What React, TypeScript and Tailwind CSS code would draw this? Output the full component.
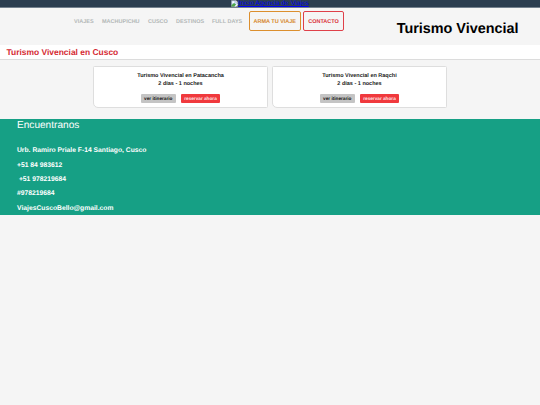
const links = [
  { label: "VIAJES", width: "w-[20px]" },
  { label: "MACHUPICHU", width: "w-[38px]" },
  { label: "CUSCO", width: "w-[20px]" },
  { label: "DESTINOS", width: "w-[28px]" },
  { label: "FULL DAYS", width: "w-[31px]" },
];

const tours = [
  { name: "Turismo Vivencial en Patacancha", duration: "2 días - 1 noches" },
  { name: "Turismo Vivencial en Raqchi", duration: "2 días - 1 noches" },
];

const contact = [
  "Urb. Ramiro Priale F-14 Santiago, Cusco",
  "+51 84 983612",
  "\u00a0+51 978219684",
  "#978219684",
  "ViajesCuscoBello@gmail.com",
];

const BrokenImage = () => (
  <svg className="h-[7px] w-[7px] shrink-0" viewBox="0 0 16 16">
    <path d="M1 1h10l4 4v10H1z" fill="#c5d8f4" stroke="#a5a9ad" />
    <path d="M11 1v4h4z" fill="#fff" stroke="#a5a9ad" />
    <circle cx="5" cy="5" r="2" fill="#fff" />
    <path d="M1 15v-3l6-5 5 4-5 4z" fill="#4ea846" />
    <path d="M8 15l7-7v3l-4 4z" fill="#fff" />
  </svg>
);

const TopBar = () => (
  <div className="flex h-2 justify-center border-b border-[#74818e] bg-[#2c3e50]">
    <a href="#" className="flex h-[7px] text-[6.7px] leading-[7.6px] whitespace-nowrap text-[#0000ee] underline decoration-[0.5px] underline-offset-[1px]">
      <BrokenImage />
      Inicio Agencia de Viajes
    </a>
  </div>
);

const Header = () => (
  <header className="flex h-[37px] items-start justify-between pr-[21.5px] pl-[74px]">
    <nav className="flex items-center pt-[3px] text-[5.5px] leading-[8px] font-bold whitespace-nowrap text-[#b3b7b7]">
      {links.map((link) => (
        <a key={link.label} href="#" className={`mr-2 pt-px ${link.width}`}>
          {link.label}
        </a>
      ))}
      <a href="#" className="-ml-[2.5px] flex h-5 w-[52.5px] items-center justify-center rounded-[2px] border border-[#dc8f2e] pt-px text-[#d5872a]">
        ARMA TU VIAJE
      </a>
      <a href="#" className="ml-[2px] flex h-5 w-[41px] items-center justify-center rounded-[2px] border border-[#df4049] pt-px text-[#d92f3a]">
        CONTACTO
      </a>
    </nav>
    <h1 className="pt-[13px] text-[14.4px] leading-[17px] font-bold whitespace-nowrap text-black">Turismo Vivencial</h1>
  </header>
);

const TourCard = ({ name, duration }: { name: string; duration: string }) => (
  <article className="flex h-[42px] w-[175px] flex-col items-center rounded-[1.5px] rounded-bl-[5px] border border-[#dedede] bg-white pt-[4px] font-bold text-[#222]">
    <h3 className="text-[5.5px] leading-[10px]">{name}</h3>
    <p className="-mt-px text-[5.5px] leading-[8px]">{duration}</p>
    <div className="mt-[6px] flex gap-[5px] text-[4.7px] leading-[9px]">
      <a href="#" className="h-[9px] w-[35px] rounded-[1px] bg-[#c4c4c4] text-center text-[#111]">ver itinerario</a>
      <a href="#" className="h-[9px] w-[39.5px] rounded-[1px] bg-[#f0393d] text-center text-[#ffe5e5]">reservar ahora</a>
    </div>
  </article>
);

const Footer = () => (
  <footer className="h-24 bg-[#16a085] pl-[17px] text-white">
    <h2 className="pt-px text-[10.1px] leading-[12px]">Encuentranos</h2>
    <ul className="pt-[12.2px] text-[6.75px] leading-[14.33px] font-bold">
      {contact.map((line) => (
        <li key={line}>{line}</li>
      ))}
    </ul>
  </footer>
);

export default function App() {
  return (
    <div className="min-h-screen bg-[#f5f5f5] font-['Liberation_Sans',Arial,sans-serif] [text-rendering:geometricPrecision]">
      <TopBar />
      <Header />
      <div className="h-[15px] border-b border-[#dcdcdc] bg-white pl-[6.5px]">
        <h2 className="text-[8.45px] leading-[14px] font-bold text-[#d52a33]">Turismo Vivencial en Cusco</h2>
      </div>
      <main className="flex h-[59px] justify-center gap-1 pt-[6px]">
        {tours.map((tour) => (
          <TourCard key={tour.name} {...tour} />
        ))}
      </main>
      <Footer />
    </div>
  );
}
